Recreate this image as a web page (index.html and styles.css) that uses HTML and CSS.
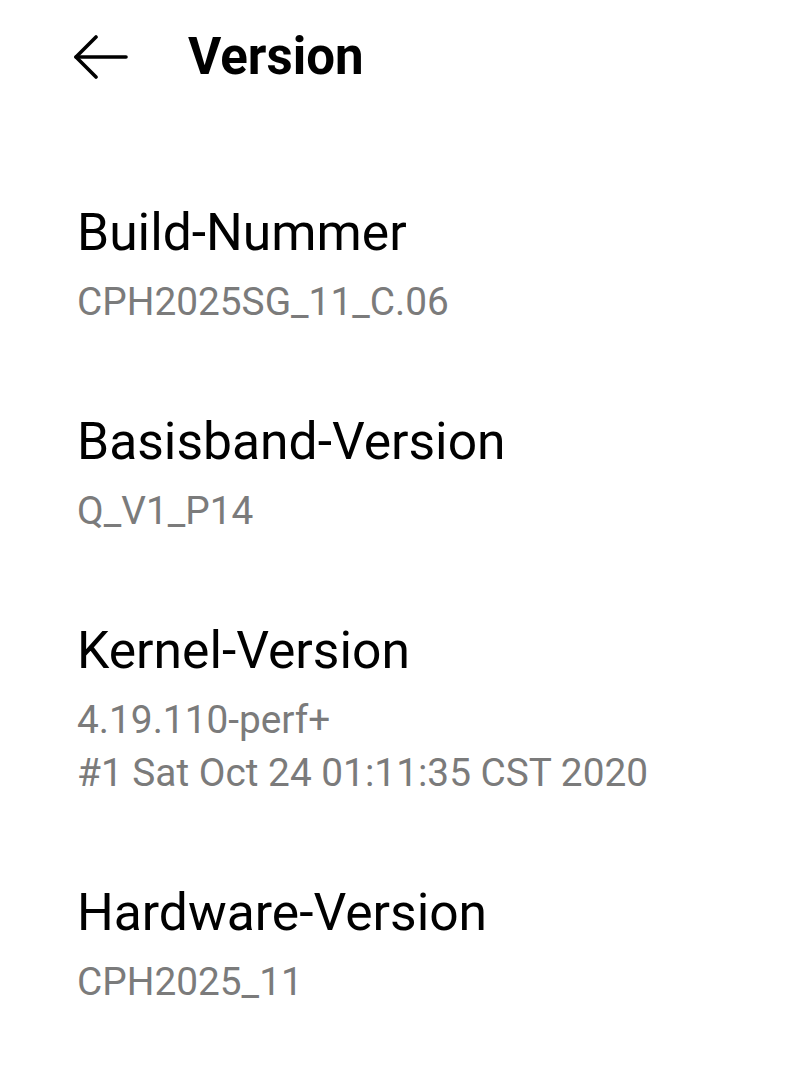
FILE: index.html
```html
<!DOCTYPE html>
<html lang="de">
<head>
  <meta charset="UTF-8">
  <meta name="viewport" content="width=device-width, initial-scale=1.0">
  <title>Version</title>
  <link rel="stylesheet" href="styles.css">
</head>
<body>
  <!-- Top bar -->
  <header class="top_bar">
    <button class="back_btn" aria-label="Zurück">
      <svg width="54" height="46" viewBox="0 0 54 46" fill="none" stroke="#000" stroke-width="3.6" stroke-linecap="round" stroke-linejoin="round">
        <path d="M2 23 H52"/>
        <path d="M22 3 L2 23 L22 43"/>
      </svg>
    </button>
    <h1 class="page_title">Version</h1>
  </header>

  <!-- Version info list -->
  <main class="info_list">
    <div class="info_item">
      <div class="info_title">Build-Nummer</div>
      <div class="info_value">CPH2025SG_11_C.06</div>
    </div>
    <div class="info_item">
      <div class="info_title">Basisband-Version</div>
      <div class="info_value">Q_V1_P14</div>
    </div>
    <div class="info_item">
      <div class="info_title">Kernel-Version</div>
      <div class="info_value">4.19.110-perf+<br>#1 Sat Oct 24 01:11:35 CST 2020</div>
    </div>
    <div class="info_item">
      <div class="info_title">Hardware-Version</div>
      <div class="info_value">CPH2025_11</div>
    </div>
  </main>
</body>
</html>
```

FILE: styles.css
```css
/* Page */
body {
  margin: 0;
  padding: 0;
  background-color: #ffffff;
  font-family: Roboto, "Noto Sans", sans-serif;
  color: #000;
}

/* Top bar */
.top_bar {
  display: flex;
  align-items: center;
  height: 114px;
  padding-left: 74px;
}
.back_btn {
  display: flex;
  padding: 0;
  margin: 0;
  border: none;
  background: none;
  cursor: pointer;
}
.page_title {
  margin: 0 0 0 60px;
  font-size: 51px;
  font-weight: bold;
  line-height: 62px;
}

/* List */
.info_list {
  display: flex;
  flex-direction: column;
  gap: 83px;
  padding: 88px 0 0 77px;
}
.info_title {
  font-size: 51.6px;
  line-height: 62px;
  color: #000;
}
.info_value {
  margin-top: 11px;
  font-size: 38.8px;
  line-height: 53px;
  color: #7b7b7b;
}
```
